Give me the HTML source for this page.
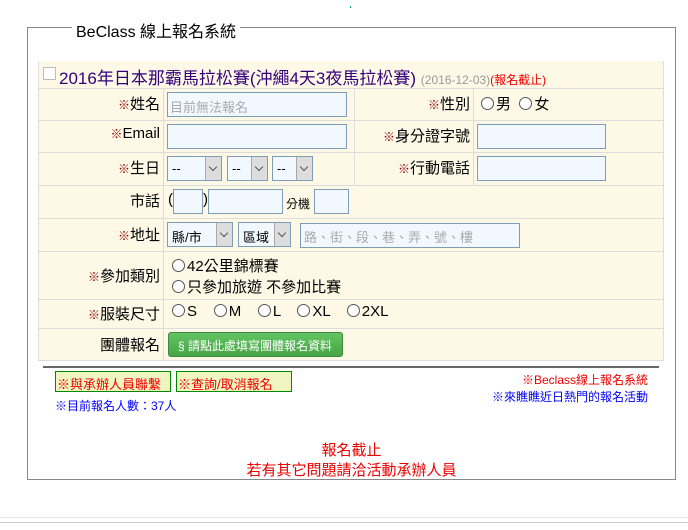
<!DOCTYPE html>
<html><head><meta charset="utf-8"><style>
*{margin:0;padding:0;box-sizing:border-box}
body{width:688px;height:530px;background:#fff;position:relative;overflow:hidden;font-family:"Liberation Sans","Noto Sans CJK TC",sans-serif;font-size:14px;color:#000}
.a{position:absolute;white-space:nowrap}
.inp{position:absolute;background:#f1f8ff;border:1px solid #7f9db9;height:25px}
.sel{position:absolute;background:#f1f8ff;border:1px solid #7f9db9;height:25px;font-size:13px;padding:4px 0 0 4px}
.sel i{position:absolute;right:0;top:0;width:16px;height:23px;background:#ddd;border-left:1px solid #aaa}
.sel i:after{content:"";position:absolute;left:4px;top:7px;width:5px;height:5px;border-right:1px solid #555;border-bottom:1px solid #555;transform:rotate(45deg)}
.lab{position:absolute;text-align:right;font-size:15px}
.m{color:#900;font-size:12px}
.hl{position:absolute;left:38px;width:626px;height:1px;background:#ddd}
.vl{position:absolute;width:1px;background:#ddd}
.r{display:inline-block;width:13px;height:13px;border:1px solid #555;border-radius:50%;vertical-align:-1px;margin-right:2px;background:#fff}
</style></head><body>
<div class="a" style="left:27px;top:27px;width:649px;height:453px;border:1px solid #888"></div>
<div class="a" style="left:72px;top:18px;background:#fff;padding:0 4px;font-size:16px">BeClass 線上報名系統</div>
<div class="a" style="left:38px;top:61px;width:626px;height:300px;background:#fef9e7;border:1px solid #ddd;border-top:none"></div>
<div class="a" style="left:43px;top:67px;width:13px;height:13px;border:1px solid #bbb;background:#fff"></div>
<div class="a" style="left:59px;top:64px;font-size:17px;color:#33007a">2016年日本那霸馬拉松賽(沖繩4天3夜馬拉松賽) <span style="font-size:12px;color:#999">(2016-12-03)</span><span style="font-size:12px;color:#e00">(報名截止)</span></div>
<div class="hl" style="top:88px"></div><div class="hl" style="top:120px"></div><div class="hl" style="top:152px"></div><div class="hl" style="top:185px"></div><div class="hl" style="top:218px"></div><div class="hl" style="top:251px"></div><div class="hl" style="top:299px"></div><div class="hl" style="top:328px"></div>
<div class="vl" style="left:163px;top:88px;height:272px"></div>
<div class="vl" style="left:354px;top:88px;height:97px"></div>
<div class="vl" style="left:473px;top:88px;height:97px"></div>
<div class="lab" style="left:40px;width:120px;top:93px"><span class="m">※</span>姓名</div>
<div class="inp" style="left:167px;top:92px;width:180px;font-size:13px;color:#aaa;padding:4px 0 0 2px">目前無法報名</div>
<div class="lab" style="left:356px;width:114px;top:93px"><span class="m">※</span>性別</div>
<div class="a" style="left:481px;top:93px;font-size:15px"><span class="r"></span>男 &nbsp;<span class="r"></span>女</div>
<div class="lab" style="left:40px;width:120px;top:125px"><span class="m">※</span>Email</div>
<div class="inp" style="left:167px;top:124px;width:180px"></div>
<div class="lab" style="left:356px;width:114px;top:125px"><span class="m">※</span>身分證字號</div>
<div class="inp" style="left:477px;top:124px;width:129px"></div>
<div class="lab" style="left:40px;width:120px;top:157px"><span class="m">※</span>生日</div>
<div class="sel" style="left:167px;top:156px;width:55px">--<i></i></div>
<div class="sel" style="left:227px;top:156px;width:41px">--<i></i></div>
<div class="sel" style="left:272px;top:156px;width:41px">--<i></i></div>
<div class="lab" style="left:356px;width:114px;top:157px"><span class="m">※</span>行動電話</div>
<div class="inp" style="left:477px;top:156px;width:129px"></div>
<div class="lab" style="left:40px;width:120px;top:190px">市話</div>
<div class="a" style="left:168px;top:191px;font-size:15px">(</div>
<div class="inp" style="left:173px;top:189px;width:30px"></div>
<div class="a" style="left:203px;top:191px;font-size:15px">)</div>
<div class="inp" style="left:208px;top:189px;width:75px"></div>
<div class="a" style="left:286px;top:195px;font-size:12px">分機</div>
<div class="inp" style="left:314px;top:189px;width:35px"></div>
<div class="lab" style="left:40px;width:120px;top:224px"><span class="m">※</span>地址</div>
<div class="sel" style="left:167px;top:222px;width:66px">縣/市<i></i></div>
<div class="sel" style="left:238px;top:222px;width:53px">區域<i></i></div>
<div class="inp" style="left:300px;top:223px;width:220px;font-size:13px;color:#aaa;padding:3px 0 0 3px">路、街、段、巷、弄、號、樓</div>
<div class="lab" style="left:40px;width:120px;top:265px"><span class="m">※</span>參加類別</div>
<div class="a" style="left:172px;top:256px;font-size:15px;line-height:21px"><span class="r"></span>42公里錦標賽<br><span class="r"></span>只參加旅遊 不參加比賽</div>
<div class="lab" style="left:40px;width:120px;top:303px"><span class="m">※</span>服裝尺寸</div>
<div class="a" style="left:172px;top:303px;font-size:15px"><span class="r"></span>S &nbsp;&nbsp;&nbsp;<span class="r"></span>M &nbsp;&nbsp;&nbsp;<span class="r"></span>L &nbsp;&nbsp;&nbsp;<span class="r"></span>XL &nbsp;&nbsp;&nbsp;<span class="r"></span>2XL</div>
<div class="lab" style="left:40px;width:120px;top:334px">團體報名</div>
<div class="a" style="left:168px;top:332px;width:175px;height:25px;background:linear-gradient(#62c462,#47a447);border:1px solid #3d8b3d;border-radius:3px;color:#fff;font-size:12px;padding:4px 0 0 9px">§ 請點此處填寫團體報名資料</div>
<div class="a" style="left:43px;top:366px;width:616px;height:2px;background:#666"></div>
<div class="a" style="left:55px;top:371px;width:116px;height:21px;background:#eef5c0;border:1px solid #080;color:#e00;font-size:13px;padding:2px 0 0 1px">※與承辦人員聯繫</div>
<div class="a" style="left:176px;top:371px;width:116px;height:21px;background:#eef5c0;border:1px solid #080;color:#e00;font-size:13px;padding:2px 0 0 1px">※查詢/取消報名</div>
<div class="a" style="left:55px;top:397px;color:#00f;font-size:12px">※目前報名人數：37人</div>
<div class="a" style="right:40px;top:371px;color:#e00;font-size:12px">※Beclass線上報名系統</div>
<div class="a" style="right:40px;top:388px;color:#00f;font-size:12px">※來瞧瞧近日熱門的報名活動</div>
<div class="a" style="left:27px;width:649px;top:441px;text-align:center;color:#e00;font-size:15px;line-height:20px">報名截止<br>若有其它問題請洽活動承辦人員</div>
<div class="a" style="left:0;top:517px;width:688px;height:1px;background:#e4e4e4"></div>
<div class="a" style="left:0;top:522px;width:688px;height:1px;background:#ccc"></div>
<div class="a" style="left:350px;top:6px;width:1px;height:2px;background:#0a8"></div>
</body></html>
